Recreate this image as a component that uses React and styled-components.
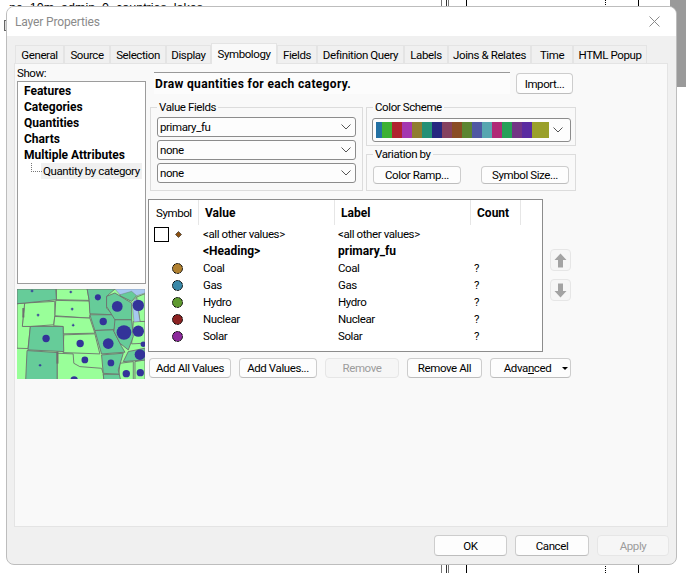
import React from 'react';
import styled, { createGlobalStyle, css } from 'styled-components';

const Global = createGlobalStyle`
  html, body { margin: 0; padding: 0; background: #fff; }
  body { font-family: Roboto, "Liberation Sans", sans-serif; font-size: 11.5px; letter-spacing: -0.4px; color: #000; }
  * { box-sizing: border-box; }
`;
const boldText = css`
  font-size: 12px;
  font-weight: 700;
  letter-spacing: 0;
`;

const Page = styled.div`
  position: relative;
  width: 686px;
  height: 573px;
  overflow: hidden;
  background: #fff;
  padding: 6px 0 0 6px;
`;
const BehindText = styled.div`
  position: absolute;
  left: 9px;
  top: 1px;
  height: 5px;
  overflow: hidden;
  font-family: "Liberation Sans", sans-serif;
  font-size: 12.5px;
  letter-spacing: 0;
  line-height: 14px;
  white-space: nowrap;
`;
const BehindLine = styled.div`
  position: absolute;
  left: ${p => p.$x}px;
  top: 0;
  height: 573px;
  width: 0;
  border-left: 1px ${p => (p.$dotted ? 'dotted' : 'solid')} ${p => p.$color || '#000'};
`;
const BehindBox = styled.div`
  position: absolute;
  left: 4px;
  top: 20px;
  width: 6px;
  height: 11px;
  border: 1px solid #666;
  background: #ddd;
`;
const BehindGray = styled.div`
  position: absolute;
  left: 670px;
  top: 0;
  width: 16px;
  height: 87px;
  background: #9a9a9a;
`;

const Dialog = styled.div`
  position: relative;
  width: 671px;
  height: 559px;
  display: flex;
  flex-direction: column;
  border: 1px solid #bdbdbd;
  border-radius: 8px;
  overflow: hidden;
  background: #f0f0f0;
`;
const TitleBar = styled.div`
  height: 29px;
  flex: none;
  background: #fff;
  display: flex;
  align-items: center;
  justify-content: space-between;
  padding: 0 16px 0 8px;
  color: #8a8a8a;
  font-size: 12px;
  letter-spacing: -0.15px;
`;
const Body = styled.div`
  flex: 1;
  display: flex;
  flex-direction: column;
  padding: 9px 8px 0 7px;
`;
const Tabs = styled.div`
  display: flex;
  height: 18px;
  flex: none;
  align-items: flex-end;
  padding-left: 1px;
  position: relative;
  z-index: 1;
`;
const Tab = styled.div`
  width: ${p => p.$w}px;
  height: ${p => (p.$active ? 21 : 19)}px;
  margin-bottom: -1px;
  display: flex;
  align-items: ${p => (p.$active ? 'flex-start' : 'center')};
  padding-top: ${p => (p.$active ? 3 : 0)}px;
  justify-content: center;
  background: ${p => (p.$active ? '#f9f9f9' : '#f0f0f0')};
  border: 1px solid #e4e4e4;
  border-bottom: ${p => (p.$active ? 'none' : '1px solid #e4e4e4')};
  white-space: nowrap;
`;
const Panel = styled.div`
  height: 464px;
  flex: none;
  display: grid;
  grid-template-columns: 129px 1fr;
  column-gap: 2px;
  padding: 0 2px;
  background: #f9f9f9;
  border: 1px solid #e4e4e4;
`;
const LeftColumn = styled.div`
  display: flex;
  flex-direction: column;
`;
const ShowLabel = styled.div`
  height: 17px;
  line-height: 17px;
  padding-top: 1px;
`;
const ShowList = styled.div`
  height: 203px;
  border: 1px solid #9c9c9c;
  background: #fff;
  padding: 1px 3px 0 6px;
`;
const ShowItem = styled.div`
  ${boldText}
  height: 16px;
  line-height: 16px;
  white-space: nowrap;
`;
const TreeItem = styled.div`
  position: relative;
  height: 16px;
  line-height: 16px;
  margin-left: 17px;
  padding-left: 2px;
  background: #f0f0f0;
  white-space: nowrap;
  &::before {
    content: '';
    position: absolute;
    left: -10px;
    top: 0;
    width: 10px;
    height: 8px;
    border-left: 1px dotted #777;
    border-bottom: 1px dotted #777;
  }
`;
const MapFrame = styled.svg`
  display: block;
  width: 128px;
  height: 90px;
  margin-top: 5px;
`;
const RightColumn = styled.div`
  display: flex;
  flex-direction: column;
  padding-top: 8px;
`;
const HeadRow = styled.div`
  display: flex;
  align-items: flex-start;
  gap: 6px;
  margin-left: 6px;
`;
const DrawBox = styled.div`
  ${boldText}
  width: 356px;
  height: 22px;
  border-top: 1px solid #999;
  background: #fcfcfc;
  line-height: 22px;
  padding-left: 1px;
  letter-spacing: 0.35px;
`;
const Button = styled.div`
  width: ${p => p.$w}px;
  height: ${p => p.$h || 20}px;
  margin-top: ${p => p.$mt || 0}px;
  flex: none;
  display: flex;
  align-items: center;
  justify-content: center;
  background: ${p => (p.$disabled ? '#f6f6f6' : '#fdfdfd')};
  color: ${p => (p.$disabled ? '#9c9c9c' : '#000')};
  border: 1px solid ${p => (p.$disabled ? '#e6e6e6' : '#cdcdcd')};
  border-bottom-color: ${p => (p.$disabled ? '#e6e6e6' : '#bdbdbd')};
  border-radius: 4px;
  white-space: nowrap;
`;
const GroupsRow = styled.div`
  display: flex;
  gap: 3px;
  margin: 13px 0 0 2px;
`;
const GroupColumn = styled.div`
  display: flex;
  flex-direction: column;
  gap: 8px;
`;
const Group = styled.div`
  position: relative;
  width: ${p => p.$w}px;
  height: ${p => p.$h}px;
  border: 1px solid #dcdcdc;
  padding: ${p => p.$pad};
  display: flex;
  flex-direction: ${p => p.$dir || 'column'};
  justify-content: ${p => p.$justify || 'flex-start'};
  gap: 3px;
`;
const Legend = styled.span`
  position: absolute;
  left: 6px;
  top: -9px;
  padding: 0 2px;
  line-height: 16px;
  background: #f9f9f9;
`;
const ComboBox = styled.div`
  height: ${p => p.$h || 20}px;
  border: 1px solid #8c8c8c;
  border-radius: 3px;
  background: #fdfdfd;
  display: flex;
  align-items: center;
  justify-content: space-between;
  padding: 0 3px 0 ${p => p.$pl || 2}px;
`;
const Chevron = styled.svg`
  width: 10px;
  height: 6px;
  flex: none;
  margin-right: ${p => p.$mr || 0}px;
`;
const Ramp = styled.div`
  display: flex;
  height: 16px;
`;
const Swatch = styled.div`
  width: ${p => p.$w}px;
  background: ${p => p.$c};
`;
const TableRow = styled.div`
  display: flex;
  gap: 7px;
  margin-top: 8px;
`;
const Table = styled.div`
  width: 395px;
  height: 153px;
  border: 1px solid #8c8c8c;
  background: #fff;
`;
const TableHead = styled.div`
  display: grid;
  grid-template-columns: 50px 136px 136px 50px;
  height: 26px;
  padding-bottom: 1px;
`;
const HeadCell = styled.div`
  ${p => (p.$normal ? '' : boldText)}
  display: flex;
  align-items: center;
  padding-left: ${p => p.$pl}px;
  border-right: 1px solid #e6e6e6;
`;
const TableRowLine = styled.div`
  ${p => (p.$bold ? boldText : '')}
  display: grid;
  grid-template-columns: 50px 136px 136px 50px;
  height: 17px;
  line-height: 17px;
`;
const SymbolCell = styled.div`
  display: flex;
  align-items: center;
  padding-left: ${p => (p.$first ? 5 : 23)}px;
  gap: 6px;
`;
const TextCell = styled.div`
  padding-left: ${p => p.$pl}px;
  white-space: nowrap;
`;
const WhiteSwatch = styled.div`
  width: 15px;
  height: 15px;
  flex: none;
  border: 1px solid #000;
  background: #fff;
  margin-top: -1px;
`;
const ArrowColumn = styled.div`
  display: flex;
  flex-direction: column;
  gap: 8px;
  padding-top: 50px;
`;
const ArrowButton = styled.div`
  width: 21px;
  height: 22px;
  border: 1px solid #e6e6e6;
  border-radius: 4px;
  background: #f6f6f6;
  display: flex;
  align-items: center;
  justify-content: center;
`;
const ActionRow = styled.div`
  display: flex;
  gap: 8px;
  margin: 6px 0 0 1px;
`;
const Underlined = styled.span`
  text-decoration: underline;
`;
const Caret = styled.span`
  position: absolute;
  right: 2px;
  top: 8px;
  border-left: 3px solid transparent;
  border-right: 3px solid transparent;
  border-top: 3px solid #000;
`;
const AdvancedButton = styled(Button)`
  position: relative;
  padding-right: 6px;
`;
const Footer = styled.div`
  display: flex;
  justify-content: flex-end;
  gap: 8px;
  margin: 8px -1px 0 0;
`;

const tabs = [
  ['General', 49], ['Source', 46], ['Selection', 56], ['Display', 45],
  ['Symbology', 66], ['Fields', 40], ['Definition Query', 87], ['Labels', 44],
  ['Joins & Relates', 83], ['Time', 42], ['HTML Popup', 74],
];
const ramp = [
  [6, '#2471a3'], [10, '#3cb033'], [10, '#b0242f'], [10, '#a437b0'], [10, '#8f7d30'],
  [10, '#249076'], [10, '#26287f'], [10, '#85415f'], [10, '#8a4c24'], [10, '#5b8531'],
  [10, '#5059a3'], [10, '#58a6b0'], [10, '#b02a76'], [10, '#26a058'], [10, '#733585'],
  [10, '#5a2ba0'], [17, '#9aa02a'],
];
const rows = [
  ['Coal', '#b08030'], ['Gas', '#3a88a8'], ['Hydro', '#5f9a30'],
  ['Nuclear', '#8c2222'], ['Solar', '#8c2a9c'],
];

const darkStates = [
  '52,298 168,298 170,330 75,340 52,342',
  '92,410 190,410 192,485 85,480',
  '82,482 172,488 172,570 78,570',
  '262,298 345,298 320,320 320,355 340,375 270,372 268,332',
  '270,375 345,375 348,410 340,420 285,422',
  '285,422 340,420 365,470 375,487 305,492',
  '320,320 345,310 395,340 395,390 345,390 320,350',
  '345,390 395,390 400,440 385,480 360,460 342,425',
  '385,485 435,475 435,510 370,515',
  '305,495 370,490 355,540 358,553 310,550',
  '310,553 358,553 362,570 312,570',
  '360,298 400,298 410,318 395,335 360,318',
];
const lightStates = [
  '170,298 262,298 268,332 170,330',
  '168,332 268,334 272,372 268,385 165,378',
  '75,340 165,335 165,378 162,405 92,410 68,410 70,385',
  '165,380 270,385 285,430 190,432 190,410 162,408',
  '192,435 285,432 300,492 190,488',
  '52,342 75,340 70,385 68,410 92,410 85,476 52,475',
  '172,490 172,570 312,570 310,550 305,535 240,530 222,520 220,492',
  '400,395 435,395 435,460 395,462',
  '360,520 400,515 400,570 355,570',
  '405,515 435,510 435,570 405,570',
  '410,322 435,312 435,395 420,395',
];
const water = [
  '345,298 435,298 435,310 410,318 395,305 360,315',
  '397,340 408,325 420,395 402,397',
];
const dots = [
  [294, 323, 9], [352, 350, 16], [415, 347, 17], [310, 395, 11], [372, 428, 22], [415, 424, 17],
  [139, 446, 11], [241, 461, 11], [325, 461, 16], [430, 463, 8], [255, 510, 10], [333, 519, 10],
  [420, 494, 16], [379, 551, 11], [421, 548, 11], [223, 570, 11],
];
const pluses = [[97, 304], [213, 307], [217, 358], [115, 376], [220, 406], [121, 526]];

function MapPreview() {
  return (
    <MapFrame viewBox="52 298 383 269" preserveAspectRatio="none">
      <rect x="52" y="298" width="383" height="269" fill="#99ff99" />
      {lightStates.map(p => <polygon key={p} points={p} fill="#99ff99" stroke="#6e6e6e" strokeWidth="2.6" />)}
      {darkStates.map(p => <polygon key={p} points={p} fill="#66cc99" stroke="#6e6e6e" strokeWidth="2.6" />)}
      {water.map(p => <polygon key={p} points={p} fill="#a6c8f0" stroke="#6e6e6e" strokeWidth="1.2" />)}
      <rect x="68" y="355" width="6" height="28" fill="#6e6e6e" />
      <rect x="170" y="485" width="6" height="36" fill="#6e6e6e" />
      {dots.map(([x, y, r]) => <circle key={`${x}-${y}`} cx={x} cy={y} r={r} fill="#333399" />)}
      {pluses.map(([x, y]) => (
        <path key={`${x}-${y}`} d={`M${x - 4} ${y}H${x + 4}M${x} ${y - 4}V${y + 4}`} stroke="#333399" strokeWidth="3" />
      ))}
    </MapFrame>
  );
}

function Down({ mr }) {
  return (
    <Chevron viewBox="0 0 10 6" $mr={mr}>
      <polyline points="0.5,0.5 5,5 9.5,0.5" fill="none" stroke="#555" strokeWidth="1" />
    </Chevron>
  );
}

function Combo({ children }) {
  return (
    <ComboBox>
      <span>{children}</span>
      <Down mr={1} />
    </ComboBox>
  );
}

function Arrow({ up }) {
  return (
    <svg width="13" height="15" viewBox="0 0 13 15">
      <path
        d={up ? 'M6.5 0.5L12.5 7H9V14.5H4V7H0.5Z' : 'M6.5 14.5L12.5 8H9V0.5H4V8H0.5Z'}
        fill="#a3a3a3"
      />
    </svg>
  );
}

function Marker({ color }) {
  return (
    <svg width="11" height="11" viewBox="0 0 11 11">
      <circle cx="5.5" cy="5.5" r="5" fill={color} stroke="#000" strokeWidth="1" strokeDasharray="2.4 0.6" />
    </svg>
  );
}

export default function App() {
  return (
    <Page>
      <Global />
      <BehindText>ne_10m_admin_0_countries_lakes</BehindText>
      <BehindBox />
      <BehindGray />
      <BehindLine $x={441} $color="#777" />
      <BehindLine $x={446} $color="#333" />
      <BehindLine $x={448} $color="#777" />
      <BehindLine $x={466} />
      <BehindLine $x={605} $dotted />
      <BehindLine $x={638} />
      <Dialog>
        <TitleBar>
          <span>Layer Properties</span>
          <svg width="11" height="11" viewBox="0 0 11 11">
            <path d="M0.5 0.5L10.5 10.5M10.5 0.5L0.5 10.5" stroke="#8a8a8a" strokeWidth="1" fill="none" />
          </svg>
        </TitleBar>
        <Body>
          <Tabs>
            {tabs.map(([name, w]) => (
              <Tab key={name} $w={w} $active={name === 'Symbology'}>{name}</Tab>
            ))}
          </Tabs>
          <Panel>
            <LeftColumn>
              <ShowLabel>Show:</ShowLabel>
              <ShowList>
                <ShowItem>Features</ShowItem>
                <ShowItem>Categories</ShowItem>
                <ShowItem>Quantities</ShowItem>
                <ShowItem>Charts</ShowItem>
                <ShowItem>Multiple Attributes</ShowItem>
                <TreeItem>Quantity by category</TreeItem>
              </ShowList>
              <MapPreview />
            </LeftColumn>
            <RightColumn>
              <HeadRow>
                <DrawBox>Draw quantities for each category.</DrawBox>
                <Button $w={57} $h={21} $mt={1}>Import...</Button>
              </HeadRow>
              <GroupsRow>
                <Group $w={213} $h={84} $pad="9px 6px 0 6px">
                  <Legend>Value Fields</Legend>
                  <Combo>primary_fu</Combo>
                  <Combo>none</Combo>
                  <Combo>none</Combo>
                </Group>
                <GroupColumn>
                  <Group $w={210} $h={39} $pad="10px 4px 0 5px">
                    <Legend>Color Scheme</Legend>
                    <ComboBox $h={24} $pl={3}>
                      <Ramp>
                        {ramp.map(([w, c]) => <Swatch key={c} $w={w} $c={c} />)}
                      </Ramp>
                      <Down mr={4} />
                    </ComboBox>
                  </Group>
                  <Group $w={210} $h={37} $dir="row" $justify="space-between" $pad="11px 6px 0 6px">
                    <Legend>Variation by</Legend>
                    <Button $w={88} $h={18}>Color Ramp...</Button>
                    <Button $w={88} $h={18}>Symbol Size...</Button>
                  </Group>
                </GroupColumn>
              </GroupsRow>
              <TableRow>
                <Table>
                  <TableHead>
                    <HeadCell $pl={7} $normal>Symbol</HeadCell>
                    <HeadCell $pl={6}>Value</HeadCell>
                    <HeadCell $pl={6}>Label</HeadCell>
                    <HeadCell $pl={6}>Count</HeadCell>
                  </TableHead>
                  <TableRowLine>
                    <SymbolCell $first>
                      <WhiteSwatch />
                      <svg width="7" height="7" viewBox="0 0 7 7">
                        <polygon points="3.5,0.5 6.5,3.5 3.5,6.5 0.5,3.5" fill="#8a4f10" stroke="#222" strokeWidth="0.6" />
                      </svg>
                    </SymbolCell>
                    <TextCell $pl={4}>&lt;all other values&gt;</TextCell>
                    <TextCell $pl={3}>&lt;all other values&gt;</TextCell>
                    <TextCell $pl={3} />
                  </TableRowLine>
                  <TableRowLine $bold>
                    <SymbolCell />
                    <TextCell $pl={4}>&lt;Heading&gt;</TextCell>
                    <TextCell $pl={3}>primary_fu</TextCell>
                    <TextCell $pl={3} />
                  </TableRowLine>
                  {rows.map(([name, color]) => (
                    <TableRowLine key={name}>
                      <SymbolCell><Marker color={color} /></SymbolCell>
                      <TextCell $pl={4}>{name}</TextCell>
                      <TextCell $pl={3}>{name}</TextCell>
                      <TextCell $pl={3}>?</TextCell>
                    </TableRowLine>
                  ))}
                </Table>
                <ArrowColumn>
                  <ArrowButton><Arrow up /></ArrowButton>
                  <ArrowButton><Arrow /></ArrowButton>
                </ArrowColumn>
              </TableRow>
              <ActionRow>
                <Button $w={82}>Add All Values</Button>
                <Button $w={78}>Add Values...</Button>
                <Button $w={74} $disabled>Remove</Button>
                <Button $w={75}>Remove All</Button>
                <AdvancedButton $w={81}>
                  <span>Adva<Underlined>n</Underlined>ced</span>
                  <Caret />
                </AdvancedButton>
              </ActionRow>
            </RightColumn>
          </Panel>
          <Footer>
            <Button $w={73} $h={21}>OK</Button>
            <Button $w={74} $h={21}>Cancel</Button>
            <Button $w={72} $h={21} $disabled>Apply</Button>
          </Footer>
        </Body>
      </Dialog>
    </Page>
  );
}
